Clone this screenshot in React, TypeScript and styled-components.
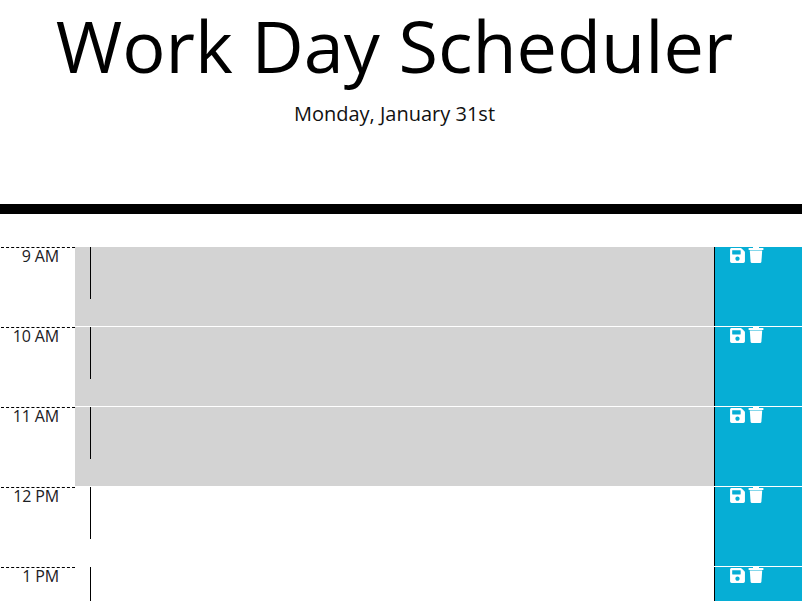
import React from "react";
import styled, { createGlobalStyle } from "styled-components";
import { FaSave } from "react-icons/fa";

const GlobalStyle = createGlobalStyle`
  *, *::before, *::after { box-sizing: border-box; }
  html, body { margin: 0; height: 100%; overflow: hidden; }
  body {
    background: #fff;
    color: #000;
    font-family: "Open Sans", sans-serif;
    font-size: 16px;
    line-height: 1;
  }
`;

const Header = styled.header`
  height: 214px;
  padding-right: 13px;
  border-bottom: 10px solid #000;
  text-align: center;
`;

const Title = styled.h1`
  margin: 0;
  font-size: 72px;
  font-weight: 400;
  line-height: 90px;
  white-space: nowrap;
`;

const CurrentDay = styled.p`
  margin: 9px 0 0;
  color: #111;
  font-size: 20px;
  line-height: 30px;
`;

const Schedule = styled.main`
  padding-top: 33px;
`;

const Row = styled.section`
  display: grid;
  grid-template-columns: 75px 639px 1fr;
  height: 80px;
`;

const Hour = styled.div`
  margin-left: 1px;
  padding-right: 16px;
  height: 79px;
  border-top: 1px dashed #000;
  color: #1c2024;
  font-size: 16px;
  line-height: 16px;
  letter-spacing: -0.15px;
  text-align: right;
`;

const Description = styled.div<{ $past: boolean }>`
  height: 79px;
  padding-left: 15px;
  background: ${({ $past }) => ($past ? "#d3d3d3" : "#fff")};
`;

const Entry = styled.div`
  height: 52px;
  border-left: 1px solid #000;
`;

const Actions = styled.div`
  display: flex;
  align-items: flex-start;
  gap: 2px;
  height: 79px;
  padding-left: 14px;
  border-left: 1px solid #000;
  background: #06aed5;
  color: #fff;
`;

const SaveIcon = styled(FaSave)`
  flex: none;
  width: 17px;
  height: 17px;
`;

const TrashSvg = styled.svg`
  flex: none;
  width: 16px;
  height: 17px;
`;

function TrashIcon() {
  return (
    <TrashSvg viewBox="0 0 16 17" fill="currentColor">
      <path d="M5 0h6v1h4.4v2H.6V1H5z" />
      <path d="M1.8 3.5h12.4l-.8 11.3q-.1 1.2-1.3 1.2H3.9q-1.2 0-1.3-1.2z" />
    </TrashSvg>
  );
}

const slots = [
  { hour: "9 AM", past: true },
  { hour: "10 AM", past: true },
  { hour: "11 AM", past: true },
  { hour: "12 PM", past: false },
  { hour: "1 PM", past: false },
];

export default function App() {
  return (
    <>
      <GlobalStyle />
      <Header>
        <Title>Work Day Scheduler</Title>
        <CurrentDay>Monday, January 31st</CurrentDay>
      </Header>
      <Schedule>
        {slots.map(({ hour, past }) => (
          <Row key={hour}>
            <Hour>{hour}</Hour>
            <Description $past={past}>
              <Entry />
            </Description>
            <Actions>
              <SaveIcon />
              <TrashIcon />
            </Actions>
          </Row>
        ))}
      </Schedule>
    </>
  );
}
